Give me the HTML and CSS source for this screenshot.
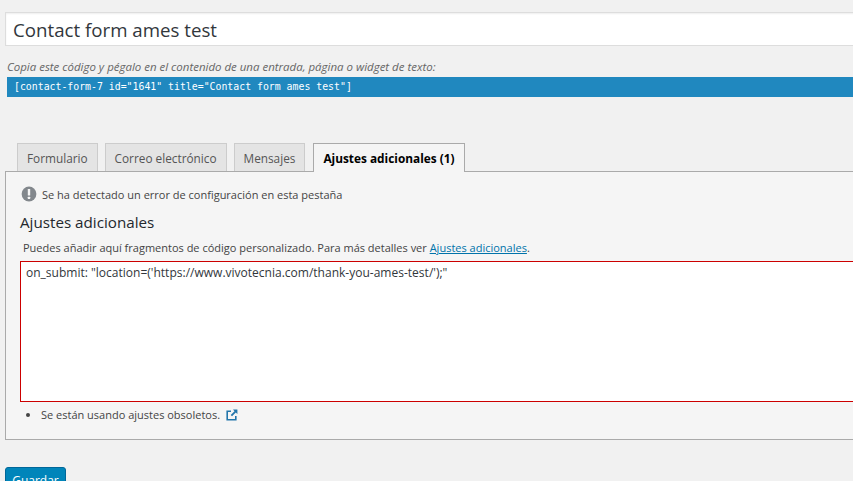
FILE: index.html
```html
<!DOCTYPE html>
<html lang="es">
<head>
<meta charset="utf-8">
<title>Contact form ames test</title>
<link rel="stylesheet" href="styles.css">
</head>
<body>
<main class="page">
  <input class="title-input" type="text" value="Contact form ames test">
  <p class="hint">Copia este código y pégalo en el contenido de una entrada, página o widget de texto:</p>
  <div class="shortcode">[contact-form-7 id="1641" title="Contact form ames test"]</div>
  <div class="tabs">
    <a class="tab">Formulario</a>
    <a class="tab">Correo electrónico</a>
    <a class="tab">Mensajes</a>
    <a class="tab tab-active">Ajustes adicionales (1)</a>
  </div>
  <section class="panel">
    <div class="config-error">
      <svg class="error-icon" viewBox="0 0 16 16" width="16" height="16" aria-hidden="true">
        <circle cx="8" cy="8" r="7.4" fill="#82878c"/>
        <rect x="6.8" y="3" width="2.4" height="6.6" rx="0.4" fill="#f5f5f5"/>
        <rect x="6.8" y="10.8" width="2.4" height="2.3" rx="0.4" fill="#f5f5f5"/>
      </svg>
      <span>Se ha detectado un error de configuración en esta pestaña</span>
    </div>
    <h2 class="heading">Ajustes adicionales</h2>
    <p class="desc">Puedes añadir aquí fragmentos de código personalizado. Para más detalles ver <a class="link">Ajustes adicionales</a>.</p>
    <div class="code-area">on_submit: "location=('https://www.vivotecnia.com/thank-you-ames-test/');"</div>
    <ul class="errors">
      <li>Se están usando ajustes obsoletos.
        <svg class="ext-icon" viewBox="0 0 12 12" width="12" height="12" aria-hidden="true">
          <path d="M5 2.2H1.2v8.6h8.6V7" fill="none" stroke="#2376ab" stroke-width="1.6"/>
          <path d="M7 .6h4.4V5L9.8 3.5 6 7.3 4.7 6 8.5 2.2z" fill="#2376ab"/>
        </svg>
      </li>
    </ul>
  </section>
  <button class="save" type="button">Guardar</button>
</main>
</body>
</html>
```
FILE: styles.css
```css
html, body {
  margin: 0;
  height: 481px;
  overflow: hidden;
  background: #f1f1f1;
}
body {
  font-family: "Open Sans", "Noto Sans", sans-serif;
  font-size: 11.5px;
  color: #444;
}
.page {
  width: 1000px;
  padding: 12px 0 0 5px;
  box-sizing: border-box;
}
.title-input {
  display: block;
  width: 100%;
  height: 34px;
  box-sizing: border-box;
  margin: 0;
  padding: 0 7px;
  border: 1px solid #ddd;
  box-shadow: inset 0 1px 2px rgba(0, 0, 0, .07);
  background: #fff;
  font-family: inherit;
  font-size: 18.7px;
  color: #32373c;
  outline: 0;
}
.hint {
  margin: 12px 0 2px 2px;
  height: 17px;
  line-height: 17px;
  font-style: italic;
  font-size: 11.47px;
  color: #666;
}
.shortcode {
  margin-left: 2px;
  height: 20px;
  line-height: 20px;
  padding-left: 7px;
  background: #2088bf;
  color: #fff;
  font-family: "DejaVu Sans Mono", monospace;
  font-size: 9.85px;
  font-weight: 500;
}
.tabs {
  display: flex;
  gap: 7px;
  margin: 46px 0 -1px 12px;
  height: 29px;
  position: relative;
}
.tab {
  box-sizing: border-box;
  height: 28px;
  padding: 0 9px;
  line-height: 28px;
  border: 1px solid #ccc;
  border-bottom: 0;
  background: #e4e4e4;
  color: #555;
  font-size: 11.8px;
  white-space: nowrap;
}
.tab-active {
  height: 29px;
  margin-left: 1px;
  border-color: #aaa;
  background: #f5f5f5;
  color: #000;
  font-weight: 700;
  font-size: 11.85px;
}
.panel {
  box-sizing: border-box;
  height: 269px;
  padding: 14px 14px 0;
  border: 1px solid #aaa;
  background: #f5f5f5;
}
.config-error {
  display: flex;
  align-items: center;
  gap: 5px;
  height: 16px;
  margin-left: 1px;
  font-size: 11px;
}
.error-icon { flex: none; }
.heading {
  margin: 9px 0 0;
  height: 22px;
  line-height: 22px;
  font-size: 15.2px;
  font-weight: 400;
  color: #23282d;
}
.desc {
  margin: 7px 0 0 3px;
  height: 16px;
  line-height: 16px;
  font-size: 11px;
}
.link {
  color: #0073aa;
  text-decoration: underline;
}
.code-area {
  box-sizing: border-box;
  width: 840px;
  height: 141px;
  margin-top: 5px;
  padding: 1px 5px;
  border: 1px solid #c00;
  background: #fff;
  color: #32373c;
  font-size: 12.02px;
  line-height: 20px;
}
.errors {
  margin: 5px 0 0;
  padding: 0 0 0 21px;
  font-size: 11px;
  line-height: 16px;
}
.ext-icon {
  vertical-align: -2px;
  margin-left: 3px;
}
.save {
  display: block;
  box-sizing: border-box;
  width: 61px;
  height: 26px;
  margin: 27px 0 0;
  padding: 0;
  border: 1px solid #006799;
  border-radius: 3px;
  background: #0085ba;
  color: #fff;
  font-family: inherit;
  font-size: 12px;
}
```
